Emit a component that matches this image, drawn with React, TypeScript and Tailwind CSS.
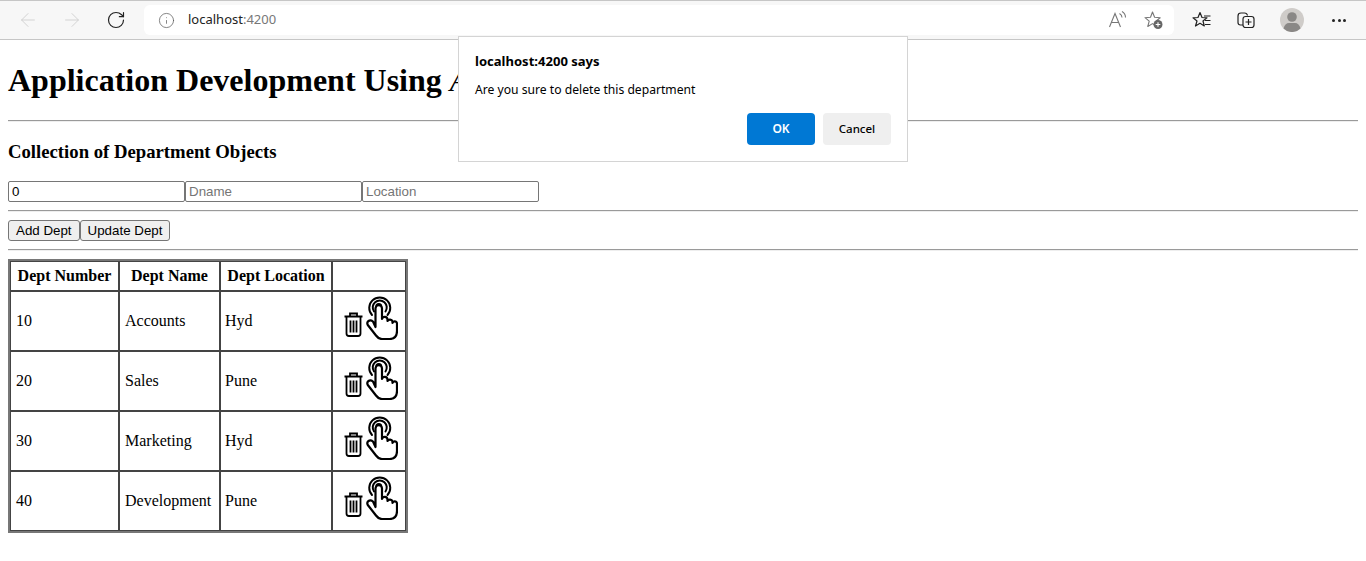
import React from 'react';
import { ArrowLeft, ArrowRight, RotateCw, Info } from 'lucide-react';

const depts = [
  { no: 10, name: 'Accounts', loc: 'Hyd' },
  { no: 20, name: 'Sales', loc: 'Pune' },
  { no: 30, name: 'Marketing', loc: 'Hyd' },
  { no: 40, name: 'Development', loc: 'Pune' },
];

const TrashIcon = () => (
  <svg width="19" height="25" viewBox="0 0 19 25" fill="none" stroke="#000" strokeWidth="1.800" className="mt-[16px] block shrink-0">
    <path d="M0.500 4.500h18M6 4V1.500h7V4" />
    <path d="M2.500 5v16.500q0 2.500 2.500 2.500h9q2.500 0 2.500-2.500V5" />
    <path d="M6.500 8.500v12M9.500 8.500v12M12.500 8.500v12" />
  </svg>
);

const TouchIcon = () => (
  <svg width="32" height="44" viewBox="0 0 32 44" fill="none" stroke="#000" strokeWidth="2" strokeLinejoin="round" strokeLinecap="round" className="ml-[3px] block shrink-0">
    <path d="M6 19a10.500 10.500 0 1 1 15.500 0" />
    <path d="M8 15.500a7 7 0 1 1 11.500 0" />
    <circle cx="12.800" cy="10.500" r="3.500" stroke="none" fill="#000" />
    <path strokeWidth="2.200" fill="#fff" d="M9.500 31V12.500a3 3 0 0 1 6.500 0V23a2.800 2.800 0 0 1 5.500 .5v1.500a2.700 2.700 0 0 1 5 .5v1.500a2.300 2.300 0 0 1 4.500 .5V35q0 8-7.500 8H16q-3.500 0-6-3.500L1.800 29q-1.300-2.500.7-4t4.500.5z" />
  </svg>
);

const ReadAloudIcon = () => (
  <svg width="20" height="20" viewBox="0 0 20 20" fill="none" stroke="#777" strokeWidth="1.100">
    <path d="M1.500 17 7 3.500 12.500 17M3.300 12.500h7.400" />
    <path d="M11.500 3.500q2.500 1.500 2.500 4M14 1.500q3.500 2 3.500 6" />
  </svg>
);

const FavoriteAddIcon = () => (
  <svg width="20" height="20" viewBox="0 0 20 20" fill="none">
    <path d="M8.500 2 10.600 7.300 16.200 7.700 11.900 11.200 13.300 16.500 8.500 13.600 3.800 16.500 5.200 11.200 1 7.700 6.500 7.300z" stroke="#777" strokeWidth="1.100" strokeLinejoin="round" />
    <circle cx="14" cy="14.500" r="4.500" fill="#666" />
    <path d="M14 12.200v4.600M11.700 14.500h4.600" stroke="#fff" strokeWidth="1.100" />
  </svg>
);

const FavoritesIcon = () => (
  <svg width="20" height="20" viewBox="0 0 20 20" fill="none" stroke="#222" strokeWidth="1.200" strokeLinejoin="round">
    <path d="M8 2.500 10 7.500 15 7.800 11 11 12.300 16 8 13.300 3.500 16 5 11 1 7.800 6 7.500z" />
    <path d="M12 6h6.500M13 10.500h5.500M13 14.500h5.500" />
  </svg>
);

const CollectionsIcon = () => (
  <svg width="20" height="20" viewBox="0 0 20 20" fill="none" stroke="#222" strokeWidth="1.200">
    <path d="M7 15H4.500Q2 15 2 12.500V6q0-3 3-3h3.500q2.500 0 3 2.500" />
    <rect x="7" y="6.500" width="11" height="11" rx="2.500" />
    <path d="M12.500 9v6M9.500 12h6" />
  </svg>
);

const AvatarIcon = () => (
  <svg width="24" height="24" viewBox="0 0 24 24">
    <circle cx="12" cy="12" r="12" fill="#cfccc9" />
    <circle cx="12" cy="9" r="4.800" fill="#8a8886" />
    <path d="M3.500 20.500Q5 15 9 15h6q4 0 5.500 5.500A12 12 0 0 1 3.500 20.500z" fill="#8a8886" />
  </svg>
);

const cellClass = 'border border-[#444]';
const inputClass = "h-[21px] w-[177px] rounded-[2px] border border-[#767676] px-[3px] font-['Liberation_Sans',sans-serif] text-[13.33px] placeholder:text-[#757575]";
const buttonClass = "h-[21px] rounded-[3px] border border-[#767676] bg-[#efefef] px-[7px] font-['Liberation_Sans',sans-serif] text-[13.33px]";
const hrClass = 'h-[2px] border-t border-b border-t-[#9a9a9a] border-b-[#eeeeee]';

const App = () => {
  return (
    <div className="relative h-[561px] overflow-hidden bg-white font-['Liberation_Serif',serif] text-black">
      {/* browser toolbar */}
      <div className="flex h-10 items-center border-y border-[#c6c6c6] bg-[#f7f7f7] font-['Noto_Sans',sans-serif]">
        <div className="flex w-[144px] shrink-0 items-center pl-[17px]">
          <ArrowLeft size={22} strokeWidth={1} className="text-[#cfcfcf]" />
          <ArrowRight size={22} strokeWidth={1} className="ml-[22px] text-[#cfcfcf]" />
          <RotateCw size={20} strokeWidth={1.4} className="ml-[23px] text-[#222]" />
        </div>
        <div className="flex h-[30px] w-[1030px] shrink-0 items-center rounded-md bg-white">
          <Info size={17} strokeWidth={1} className="ml-[14px] text-[#555]" />
          <span className="ml-[13px] text-[13px] text-[#222]">
            localhost<span className="text-[#777]">:4200</span>
          </span>
          <div className="mr-[10px] ml-auto flex items-center gap-[16px]">
            <ReadAloudIcon />
            <FavoriteAddIcon />
          </div>
        </div>
        <div className="flex flex-1 items-center pl-[18px]">
          <FavoritesIcon />
          <div className="ml-[24px]"><CollectionsIcon /></div>
          <div className="ml-[24px]"><AvatarIcon /></div>
          <div className="ml-[28px] flex gap-[2.500px]">
            <span className="h-[3px] w-[3px] rounded-full bg-[#222]" />
            <span className="h-[3px] w-[3px] rounded-full bg-[#222]" />
            <span className="h-[3px] w-[3px] rounded-full bg-[#222]" />
          </div>
        </div>
      </div>

      {/* page content */}
      <div className="p-2">
        <h1 className="mt-[14px] mb-[21px] text-[32px] leading-[37px] font-bold whitespace-nowrap">
          Application Development Using <span className="font-normal italic">A</span>
        </h1>
        <hr className={hrClass} />
        <h3 className="mt-[19px] mb-[19px] text-[18.72px] leading-[21px] font-bold">Collection of Department Objects</h3>
        <div className="flex">
          <input defaultValue="0" className={inputClass} />
          <input placeholder="Dname" className={inputClass} />
          <input placeholder="Location" className={inputClass} />
        </div>
        <hr className={`mt-2 ${hrClass}`} />
        <div className="mt-2 flex">
          <button className={buttonClass}>Add Dept</button>
          <button className={buttonClass}>Update Dept</button>
        </div>
        <hr className={`mt-2 ${hrClass}`} />
        <table className="mt-2 w-[400px] table-fixed border-separate border-spacing-0 border-2 border-[#777] text-base">
          <colgroup>
            <col className="w-[109px]" />
            <col className="w-[101px]" />
            <col className="w-[112px]" />
            <col />
          </colgroup>
          <thead>
            <tr className="h-[30px] text-[16px] font-bold">
              <th className={`${cellClass} px-1`}>Dept Number</th>
              <th className={`${cellClass} px-1`}>Dept Name</th>
              <th className={`${cellClass} px-1`}>Dept Location</th>
              <th className={cellClass} />
            </tr>
          </thead>
          <tbody>
            {depts.map((d) => (
              <tr key={d.no} className="h-[60px]">
                <td className={`${cellClass} pl-[5px]`}>{d.no}</td>
                <td className={`${cellClass} pl-[5px]`}>{d.name}</td>
                <td className={`${cellClass} pl-1`}>{d.loc}</td>
                <td className={`${cellClass} pt-1 align-top`}>
                  <div className="flex items-start pl-[11px]">
                    <TrashIcon />
                    <TouchIcon />
                  </div>
                </td>
              </tr>
            ))}
          </tbody>
        </table>
      </div>

      {/* confirm dialog */}
      <div className="absolute top-[36px] left-[458px] h-[126px] w-[450px] border border-[#d4d4d4] bg-white font-['Noto_Sans',sans-serif] text-[12.15px]">
        <div className="mt-[15px] ml-4 text-[13.05px] leading-[18px] font-bold">localhost:4200 says</div>
        <div className="mt-[11px] ml-4 leading-[17px]">Are you sure to delete this department</div>
        <div className="mt-[15px] mr-4 flex justify-end gap-2">
          <button className="h-8 w-[68px] rounded-sm bg-[#0078d4] text-[12px] font-semibold text-white">OK</button>
          <button className="h-8 w-[68px] rounded-sm bg-[#efefef] text-[11.5px] font-medium">Cancel</button>
        </div>
      </div>
    </div>
  );
};

export default App;
